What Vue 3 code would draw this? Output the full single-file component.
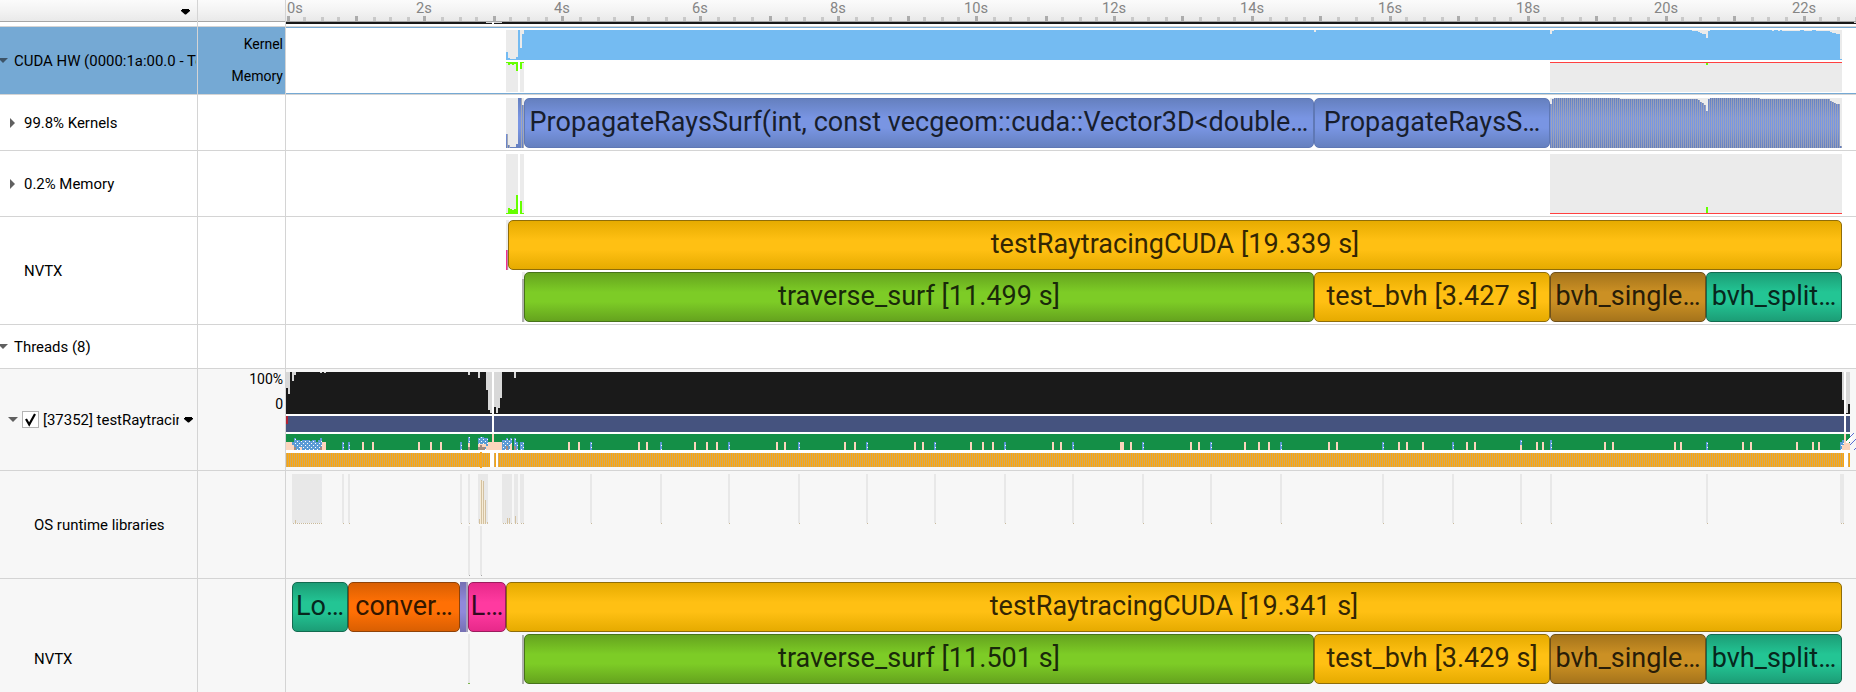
<script setup>
const X0 = 286

// Ruler
const at = (s) => (s === 0 ? 288 : 2 * Math.floor((287.85 + s * 68.93) / 2))
const ticks = []
for (let q = 0; q <= 91; q++) {
  ticks.push({ x: at(q / 4) - 1, major: q % 4 === 0 })
}
const tickLabels = Array.from({ length: 12 }, (_, i) => ({
  text: i * 2 + 's',
  x: i === 0 ? 295 : at(i * 2),
}))

// Histogram outline: steps are [x, top]
function area(steps, end, bottom) {
  let d = `M${steps[0][0]} ${bottom}`
  steps.forEach(([x, y], i) => {
    const next = i + 1 < steps.length ? steps[i + 1][0] : end
    d += `V${y}H${next}`
  })
  return d + `V${bottom}Z`
}
const kernelUsage = area([
  [506, 22], [508, 28], [510, 29], [516, 27], [518, 0], [520, 18], [522, 4], [524, 0],
  [1314, 2], [1316, 0], [1550, 4], [1552, 1], [1554, 0], [1692, 1], [1698, 2], [1700, 3],
  [1702, 4], [1706, 8], [1708, 1], [1710, 0], [1772, 1], [1774, 0], [1778, 1], [1780, 0],
  [1782, 1], [1800, 0], [1804, 1], [1812, 0], [1816, 1], [1830, 2], [1832, 3], [1836, 4], [1840, 29],
], 1842, 30)
const kernelsHead = area([[506, 36], [508, 47], [510, 49], [516, 46], [518, 0], [520, 0], [522, 7]], 524, 50)
const kernelsTail = area([
  [1550, 6], [1552, 1], [1554, 0], [1620, 1], [1698, 2], [1700, 4], [1702, 5], [1704, 7],
  [1706, 13], [1708, 1], [1710, 0], [1760, 1], [1830, 3], [1832, 4], [1834, 5], [1836, 6], [1840, 48],
], 1842, 50)

const memUsage = [[506, 1], [508, 3], [510, 2], [512, 3], [514, 2], [516, 9], [520, 7], [522, 1]]
const memOps = [[506, 1], [508, 6], [510, 5], [512, 4], [514, 5], [516, 19], [520, 13], [522, 1]]

const cpuIdle = [
  [286, 16], [288, 22], [292, 9], [294, 3], [320, 1], [324, 1], [468, 3], [478, 6], [486, 18],
  [488, 38], [490, 41], [494, 35], [496, 41], [498, 36], [500, 26], [514, 6],
  [1842, 28], [1846, 41], [1848, 32],
]
const peach = [
  362, 372, 418, 430, 440, 568, 578, 638, 646, 694, 706, 716, 776, 784, 844, 854, 914, 922, 970, 982, 992,
  1052, 1060, 1120, 1122, 1130, 1190, 1198, 1244, 1258, 1268, 1328, 1336, 1398, 1406, 1422, 1466, 1474,
  1536, 1542, 1604, 1612, 1674, 1680, 1742, 1750, 1796, 1812, 1818,
]
const calls = [590, 660, 728, 798, 866, 934, 1004, 1072, 1142, 1210, 1280, 1382, 1452, 1520, 1550, 1706]
const waits = [
  [292, 442, 2], [294, 438, 2], [296, 440, 4], [300, 441, 2], [302, 440, 6], [308, 440, 2], [310, 441, 2],
  [312, 440, 4], [316, 442, 2], [318, 440, 2], [320, 438, 2],
  [342, 442, 2], [348, 442, 2], [460, 442, 2], [468, 437, 2], [478, 438, 2], [480, 437, 4], [484, 438, 4],
  [502, 440, 4], [506, 438, 2], [508, 440, 2], [510, 438, 2], [514, 438, 2], [516, 442, 2], [520, 442, 4],
  ...calls.map((x) => [x, x === 1550 ? 440 : x === 1520 ? 440 : 442, 2]),
  [1840, 442, 2], [1842, 440, 2],
]
const osBack = [
  [292, 30], [342, 2], [348, 2], [460, 2], [468, 2], [478, 10], [502, 10], [514, 4], [520, 4],
  ...calls.map((x) => [x, 2]), [1840, 4],
]
const osTicks = []
osBack.forEach(([x, w]) => {
  for (let i = 1; i < w; i += 2) osTicks.push([x + i, 1])
})
const osPeaks = [[295, 4], [479, 5], [481, 44], [483, 43], [485, 24], [487, 2], [507, 6], [509, 6], [515, 8]]

const kernelBlocks = [
  { t: 'PropagateRaysSurf(int, const vecgeom::cuda::Vector3D<double…', w: 790, c: 'kern' },
  { t: 'PropagateRaysS…', w: 236, c: 'kern' },
]
const sub = (a, b) => [
  { t: `traverse_surf [${a} s]`, w: 790, c: 'green' },
  { t: `test_bvh [${b} s]`, w: 236, c: 'amber' },
  { t: 'bvh_single…', w: 156, c: 'brown' },
  { t: 'bvh_split…', w: 136, c: 'teal' },
]
const nvtxHw = [
  { start: 508, items: [{ t: 'testRaytracingCUDA [19.339 s]', w: 1334, c: 'amber' }] },
  { start: 524, items: sub('11.499', '3.427') },
]
const nvtxThread = [
  {
    start: 292,
    items: [
      { t: 'Lo…', w: 56, c: 'teal' },
      { t: 'conver…', w: 112, c: 'orange' },
      { t: '', w: 8, c: 'violet' },
      { t: 'L…', w: 38, c: 'pink' },
      { t: 'testRaytracingCUDA [19.341 s]', w: 1336, c: 'amber' },
    ],
  },
  { start: 524, items: sub('11.501', '3.429') },
]
</script>

<template>
  <div class="timeline">
    <div class="row header">
      <div class="name"><svg class="menu" width="10" height="6"><path d="M1 0H8V1H9V2L5 5.5H4L0 2V1H1Z" /></svg></div>
      <div class="axis"></div>
      <div class="track">
        <svg width="1570" height="26" viewBox="286 0 1570 26" shape-rendering="crispEdges">
          <rect v-for="k in ticks" :key="k.x" :x="k.x" :y="k.major ? 16 : 17" width="3" :height="k.major ? 5 : 4" :fill="k.major ? '#acacac' : '#c9c9c9'" />
          <text v-for="l in tickLabels" :key="l.text" :x="l.x" y="13" text-anchor="middle">{{ l.text }}</text>
          <rect x="286" y="21" width="1570" height="1" fill="#a6a6a6" />
          <rect x="286" y="22" width="1570" height="2" fill="#191919" />
          <rect x="486" y="22" width="16" height="1" fill="#d8d8d8" />
          <rect x="492" y="22" width="2" height="2" fill="#fff" />
          <rect x="1854" y="22" width="2" height="1" fill="#d8d8d8" />
        </svg>
      </div>
    </div>

    <div class="row selected">
      <div class="name"><svg class="tri edge" width="8" height="5"><path d="M-2 0H8L3 5Z" /></svg><span>CUDA HW (0000:1a:00.0 - Tesla)</span></div>
      <div class="axis hw"><span>Kernel</span><span>Memory</span></div>
      <div class="track">
        <svg width="1570" height="67" viewBox="286 27 1570 67" shape-rendering="crispEdges">
          <g fill="#ebebeb">
            <rect x="506" y="30" width="12" height="30" /><rect x="520" y="30" width="4" height="30" />
            <rect x="1314" y="30" width="2" height="30" /><rect x="1550" y="30" width="292" height="30" />
            <rect x="506" y="62" width="12" height="30" /><rect x="520" y="62" width="4" height="30" />
            <rect x="1550" y="62" width="292" height="30" />
          </g>
          <path :d="kernelUsage" transform="translate(0 30)" fill="#74bbf2" />
          <rect v-for="m in memUsage" :key="m[0]" :x="m[0]" y="62" width="2" :height="m[1]" fill="#66ff00" />
          <rect x="1550" y="62" width="292" height="1" fill="#ff4040" />
          <rect x="1706" y="63" width="2" height="2" fill="#66ff00" />
          <rect x="286" y="27" width="1570" height="1" fill="#75a9d4" />
          <rect x="286" y="93" width="1570" height="1" fill="#75a9d4" />
        </svg>
      </div>
    </div>

    <div class="row kernels">
      <div class="name l1"><svg class="tri" width="6" height="10"><path d="M0 0L5 5L0 10Z" /></svg><span>99.8% Kernels</span></div>
      <div class="axis"></div>
      <div class="track">
        <svg width="1570" height="55" viewBox="286 95 1570 55" shape-rendering="crispEdges">
          <defs>
            <linearGradient id="kg" x1="0" y1="0" x2="0" y2="50" gradientUnits="userSpaceOnUse">
              <stop offset="0" stop-color="#6580bf" /><stop offset=".4" stop-color="#7995e3" /><stop offset=".6" stop-color="#7995e3" /><stop offset="1" stop-color="#6580bf" />
            </linearGradient>
            <pattern id="ks" width="2" height="50" patternUnits="userSpaceOnUse"><rect x="1" width="1" height="50" fill="#a4a8b4" opacity=".8" /></pattern>
          </defs>
          <rect x="506" y="98" width="12" height="50" fill="#ebebeb" />
          <rect x="520" y="98" width="4" height="50" fill="#ebebeb" />
          <rect x="1550" y="98" width="292" height="50" fill="#ebebeb" />
          <g transform="translate(0 98)">
            <path :d="kernelsHead" fill="url(#kg)" />
            <path d="M507 36h1v14h-1zM509 47h1v3h-1zM521 0h1v50h-1zM523 7h1v43h-1z" fill="#a4a8b4" />
            <path :d="kernelsTail" fill="url(#kg)" />
            <path :d="kernelsTail" fill="url(#ks)" />
          </g>
        </svg>
        <div class="lane" :style="{ marginLeft: 524 - X0 + 'px' }">
          <div v-for="b in kernelBlocks" :key="b.t" class="block" :class="b.c" :style="{ width: b.w + 'px' }"><span>{{ b.t }}</span></div>
        </div>
      </div>
    </div>

    <div class="row memory">
      <div class="name l1"><svg class="tri" width="6" height="10"><path d="M0 0L5 5L0 10Z" /></svg><span>0.2% Memory</span></div>
      <div class="axis"></div>
      <div class="track">
        <svg width="1570" height="65" viewBox="286 151 1570 65" shape-rendering="crispEdges">
          <rect x="506" y="154" width="12" height="60" fill="#ebebeb" />
          <rect x="520" y="154" width="4" height="60" fill="#ebebeb" />
          <rect x="1550" y="154" width="292" height="60" fill="#ebebeb" />
          <rect v-for="m in memOps" :key="m[0]" :x="m[0]" :y="214 - m[1]" width="2" :height="m[1]" fill="#66ff00" />
          <rect x="1550" y="213" width="292" height="1" fill="#ff4040" />
          <rect x="1706" y="207" width="2" height="6" fill="#66ff00" />
        </svg>
      </div>
    </div>

    <div class="row nvtx">
      <div class="name l1 leaf"><span>NVTX</span></div>
      <div class="axis"></div>
      <div class="track">
        <svg width="1570" height="107" viewBox="286 217 1570 107" shape-rendering="crispEdges">
          <rect x="506" y="220" width="3" height="50" fill="#ebebeb" />
          <rect x="506" y="250" width="1" height="20" fill="#f02d90" /><rect x="507" y="250" width="1" height="20" fill="#c580a5" />
          <rect x="522" y="272" width="3" height="50" fill="#ebebeb" />
          <rect x="522" y="279" width="2" height="43" fill="#b0b0b0" />
        </svg>
        <div v-for="(l, i) in nvtxHw" :key="i" class="lane" :style="{ marginLeft: l.start - X0 + 'px' }">
          <div v-for="(b, j) in l.items" :key="j" class="block" :class="b.c" :style="{ width: b.w + 'px' }"><span>{{ b.t }}</span></div>
        </div>
      </div>
    </div>

    <div class="row threads">
      <div class="name"><svg class="tri edge" width="8" height="5"><path d="M-2 0H8L3 5Z" /></svg><span>Threads (8)</span></div>
      <div class="axis"></div>
      <div class="track"></div>
    </div>

    <div class="row thread gray">
      <div class="name item">
        <svg class="tri" width="10" height="5"><path d="M0 0H10L5 5Z" /></svg>
        <span class="check"><svg width="15" height="15"><path d="M3 7L6.2 12.5L12 2" fill="none" stroke="#000" stroke-width="2.2" /></svg></span>
        <span class="clip">[37352] testRaytracingCUDA</span>
        <svg class="drop" width="10" height="6"><path d="M1 0H8V1H9V2L5 5.5H4L0 2V1H1Z" /></svg>
      </div>
      <div class="axis cpu"><span>100%</span><span>0</span></div>
      <div class="track">
        <svg width="1570" height="101" viewBox="286 369 1570 101" shape-rendering="crispEdges">
          <defs>
            <pattern id="dots" width="4" height="4" patternUnits="userSpaceOnUse">
              <rect width="4" height="4" fill="#5b9bd5" /><rect x="1" y="1" width="1" height="1" fill="#fff" /><rect x="3" y="3" width="1" height="1" fill="#fff" />
            </pattern>
            <pattern id="stripe" width="2" height="14" patternUnits="userSpaceOnUse">
              <rect width="1" height="14" fill="#d2a85c" /><rect x="1" width="1" height="14" fill="#fca60c" />
            </pattern>
          </defs>
          <rect x="286" y="414" width="1564" height="39" fill="#fff" />
          <rect x="286" y="372" width="1564" height="42" fill="#1a1a1a" />
          <rect v-for="c in cpuIdle" :key="c[0]" :x="c[0]" y="372" width="2" :height="c[1]" fill="#d8d8d8" />
          <rect x="286" y="416" width="1564" height="16" fill="#45537f" />
          <rect x="286" y="416" width="2" height="8" fill="#b22234" />
          <rect x="286" y="434" width="1564" height="16" fill="#148f47" />
          <rect x="492" y="372" width="2" height="60" fill="#fff" /><rect x="1844" y="372" width="2" height="60" fill="#fff" />
          <g fill="#fcd5bd">
            <rect x="286" y="442" width="8" height="8" /><rect x="322" y="442" width="4" height="8" />
            <rect x="486" y="442" width="16" height="8" /><rect x="492" y="434" width="2" height="16" />
            <rect x="1844" y="434" width="2" height="16" /><rect x="1842" y="443" width="8" height="7" />
            <rect v-for="p in peach" :key="p" :x="p" y="442" width="2" height="8" />
          </g>
          <rect v-for="w in waits" :key="w[0]" :x="w[0]" :y="w[1]" :width="w[2]" :height="450 - w[1]" fill="url(#dots)" />
          <g fill="#fcd5bd">
            <rect x="292" y="445" width="2" height="5" /><rect x="300" y="447" width="2" height="3" />
            <rect x="468" y="443" width="2" height="4" /><rect x="478" y="444" width="8" height="3" />
            <rect x="486" y="446" width="2" height="4" /><rect x="510" y="444" width="2" height="6" />
            <rect x="1520" y="445" width="2" height="5" /><rect x="1842" y="445" width="2" height="5" />
          </g>
          <g fill="#a38b80">
            <rect x="294" y="447" width="2" height="3" /><rect x="320" y="447" width="2" height="3" />
            <rect x="468" y="447" width="2" height="3" /><rect x="478" y="447" width="7" height="3" /><rect x="480" y="445" width="2" height="2" />
            <rect x="506" y="446" width="2" height="4" /><rect x="514" y="446" width="2" height="4" />
          </g>
          <path d="M1846 441L1850 437V434H1852V440L1848 443H1846Z" fill="#fff" />
          <path d="M1850 437L1854 433M1850 445L1856 439M1854 450L1856 448" stroke="#5a6cd0" fill="none" shape-rendering="auto" />
          <rect x="286" y="453" width="1564" height="14" fill="url(#stripe)" />
          <g fill="#fff">
            <rect x="490" y="453" width="4" height="14" /><rect x="496" y="453" width="2" height="14" /><rect x="1844" y="453" width="4" height="14" />
          </g>
          <rect x="480" y="452" width="2" height="16" fill="#f5a623" />
        </svg>
      </div>
    </div>

    <div class="row os gray">
      <div class="name l2"><span>OS runtime libraries</span></div>
      <div class="axis"></div>
      <div class="track">
        <svg width="1570" height="107" viewBox="286 471 1570 107" shape-rendering="crispEdges">
          <rect v-for="o in osBack" :key="o[0]" :x="o[0]" y="474" :width="o[1]" height="49" fill="#e8e8e8" />
          <rect v-for="o in osTicks" :key="o[0]" :x="o[0]" y="523" width="1" height="1" fill="#c9b99a" />
          <rect v-for="o in osPeaks" :key="o[0]" :x="o[0]" :y="524 - o[1]" width="1" :height="o[1]" fill="#d3c1a0" />
          <path d="M480 480h1v44h-1zM482 481h1v43h-1zM484 500h1v24h-1z" fill="#f6ecd8" />
          <rect x="468" y="526" width="2" height="49" fill="#e8e8e8" /><rect x="480" y="526" width="2" height="49" fill="#e8e8e8" />
          <rect x="469" y="575" width="1" height="1" fill="#a8a8a8" /><rect x="481" y="575" width="1" height="1" fill="#a8a8a8" />
        </svg>
      </div>
    </div>

    <div class="row nvtx2 gray">
      <div class="name l2"><span>NVTX</span></div>
      <div class="axis"></div>
      <div class="track">
        <svg width="1570" height="113" viewBox="286 579 1570 113" shape-rendering="crispEdges">
          <rect x="468" y="634" width="2" height="50" fill="#e8e8e8" /><rect x="468" y="683" width="2" height="1" fill="#7cb84c" />
          <rect x="522" y="635" width="2" height="49" fill="#b0b0b0" />
        </svg>
        <div v-for="(l, i) in nvtxThread" :key="i" class="lane" :style="{ marginLeft: l.start - X0 + 'px' }">
          <div v-for="(b, j) in l.items" :key="j" class="block" :class="b.c" :style="{ width: b.w + 'px' }"><span>{{ b.t }}</span></div>
        </div>
      </div>
    </div>
  </div>
</template>

<style>
body { margin: 0; background: #fff; overflow: hidden; }
</style>

<style scoped>
.timeline { width: 1856px; height: 692px; overflow: hidden; font: 14.95px Roboto, "Liberation Sans", sans-serif; color: #000; background: #fff; }
.row { display: grid; grid-template-columns: 197px 87px 1570px; column-gap: 1px; box-sizing: border-box; border-bottom: 1px solid #d4d4d4; background: linear-gradient(90deg, transparent 197px, #d4d4d4 197px 198px, transparent 198px 285px, #d4d4d4 285px 286px, transparent 286px); }
.row.gray { background-color: #f7f7f7; }
.name { display: flex; align-items: center; overflow: hidden; white-space: nowrap; box-sizing: border-box; }
.name span { flex: none; }
.axis { display: flex; flex-direction: column; align-items: flex-end; box-sizing: border-box; padding-right: 2px; }
.track { position: relative; display: flex; flex-direction: column; gap: 2px; padding-top: 3px; box-sizing: border-box; min-width: 0; }
.track > svg { position: absolute; left: 0; top: 0; display: block; }
.header { height: 27px; }
.header .name, .header .axis { height: 22px; border-bottom: 1px solid #a6a6a6; box-sizing: border-box; background: linear-gradient(#fbfbfb, #f3f3f3 50%, #e9e9e9); }
.header .track { background: linear-gradient(#fbfbfb, #f3f3f3 11px, #e9e9e9 21px, #fff 21px); }
.header .menu { margin: 2px 0 0 181px; }
.header text { font-size: 14.67px; fill: #858585; }
.selected { height: 68px; }
.selected .name, .selected .axis { background: #75a9d4; }
.selected .name { border-right: 1px solid #75a9d4; }
.selected .tri { fill: #3d5468; }
.hw { font-size: 14px; line-height: 16px; padding-top: 9px; gap: 16px; }
.tri { flex: none; fill: #606060; }
.tri.edge { margin-right: 6px; }
.l1 { padding-left: 10px; }
.l1 .tri { margin-right: 8px; }
.l1.leaf { padding-left: 24px; }
.l2 { padding-left: 34px; }
.kernels { height: 56px; }
.memory { height: 66px; }
.nvtx { height: 108px; }
.threads { height: 44px; }
.thread { height: 102px; }
.os { height: 108px; }
.nvtx2 { height: 160px; }
.item { padding-left: 8px; }
.check { width: 17px; height: 17px; box-sizing: border-box; border: 1px solid #b4b4b4; background: #fff; margin: 0 4px; display: block; }
.check svg { display: block; }
.name .clip { width: 136px; overflow: hidden; }
.drop { margin-left: 5px; flex: none; }
.cpu { font-size: 14px; line-height: 16px; padding-top: 2px; gap: 9px; }
.lane { position: relative; display: flex; height: 50px; flex: none; }
.block { box-sizing: border-box; flex: none; height: 50px; border: 1px solid; border-radius: 5px; font-size: 27px; letter-spacing: 0.04px; line-height: 47px; text-align: center; overflow: hidden; white-space: nowrap; }
.block span { display: inline-block; }
.kern { color: #181e2d; border-color: #5f78b5; background: linear-gradient(#6580bf, #7995e3 40%, #7995e3 60%, #6580bf); }
.green { color: #19290a; border-color: #47731a; background: linear-gradient(#65a31e, #7dcc26 40%, #7dcc26 60%, #65a31e); }
.amber { color: #332603; border-color: #8f6d09; background: linear-gradient(#e6ab00, #ffc013 40%, #ffc013 60%, #e6ab00); }
.brown { color: #281d08; border-color: #70511a; background: linear-gradient(#a5741b, #cb9024 40%, #cb9024 60%, #a5741b); }
.teal { color: #07271d; border-color: #136b50; background: linear-gradient(#1c9d76, #23c594 40%, #23c594 60%, #1c9d76); }
.orange { color: #331700; border-color: #8f4208; background: linear-gradient(#d95f02, #ff7005 40%, #ff7005 60%, #d95f02); }
.pink { color: #330b20; border-color: #9c1c5d; background: linear-gradient(#e7298a, #ff3aa0 40%, #ff3aa0 60%, #e7298a); }
.violet { border: 0; border-right: 2px solid #a5a2bd; border-radius: 0; background: linear-gradient(#7570b3, #9089db 40%, #9089db 60%, #7570b3); }
</style>
